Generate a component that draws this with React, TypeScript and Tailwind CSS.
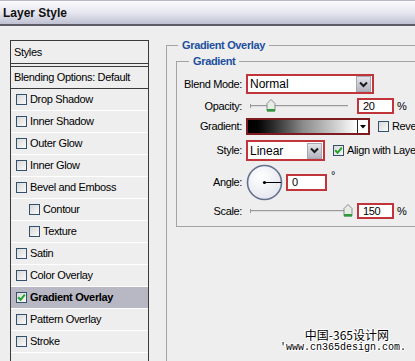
import React from "react";

function Check({ checked }: { checked?: boolean }) {
  return (
    <span className="w-[11px] h-[11px] border border-[#33506c] bg-gradient-to-br from-[#d8d8d8] to-[#fafafa] flex items-center justify-center shrink-0">
      {checked && (
        <svg width="9" height="9" viewBox="0 0 9 9">
          <path d="M1.2 4.3 L3.6 6.8 L7.8 1.6" stroke="#22a32c" strokeWidth="2" fill="none" />
        </svg>
      )}
    </span>
  );
}

function ArrowBtn() {
  return (
    <span className="w-[15px] h-[16px] mr-[1px] shrink-0 bg-gradient-to-b from-[#e4e4ea] to-[#b4b4c0] border border-[#a8a8b4] flex items-center justify-center">
      <svg width="9" height="7" viewBox="0 0 9 7">
        <path d="M1 1.5 L4.5 5 L8 1.5" stroke="#1a1a1a" strokeWidth="2" fill="none" />
      </svg>
    </span>
  );
}

function Slider({ pos }: { pos: number }) {
  return (
    <svg width="103" height="16" viewBox="0 0 103 16" className="ml-[8px] shrink-0">
      <line x1="1" y1="7.5" x2="98" y2="7.5" stroke="#9a9a9a" strokeWidth="1" />
      <line x1="1" y1="8.5" x2="98" y2="8.5" stroke="#dcdcdc" strokeWidth="1" />
      <line x1="0.5" y1="6" x2="0.5" y2="10" stroke="#9a9a9a" strokeWidth="1" />
      <path
        d={`M${pos - 4} 13 L${pos - 4} 5.5 L${pos} 1.5 L${pos + 4} 5.5 L${pos + 4} 13 Z`}
        fill="#e6ece6"
        stroke="#8a8f8a"
        strokeWidth="1"
      />
      <rect x={pos - 4} y="11" width="8" height="2.5" fill="#2f9a3a" />
    </svg>
  );
}

const items: { label: string; indent?: boolean; checked?: boolean; selected?: boolean }[] = [
  { label: "Drop Shadow" },
  { label: "Inner Shadow" },
  { label: "Outer Glow" },
  { label: "Inner Glow" },
  { label: "Bevel and Emboss" },
  { label: "Contour", indent: true },
  { label: "Texture", indent: true },
  { label: "Satin" },
  { label: "Color Overlay" },
  { label: "Gradient Overlay", checked: true, selected: true },
  { label: "Pattern Overlay" },
  { label: "Stroke" },
  { label: "" },
];

export default function App() {
  return (
    <div className="w-[415px] h-[361px] overflow-hidden relative bg-[#eeeeee] flex flex-col font-['Liberation_Sans',Arial,sans-serif] text-[11px] tracking-[-0.35px] text-black">
      {/* Title bar */}
      <div className="h-[26px] shrink-0 border-t border-[#b8b8c0] border-b-2 border-b-[#5c5c68] bg-gradient-to-b from-[#fbfbfd] via-[#e6e7ef] to-[#bfc1d3] flex items-center pl-[3px]">
        <span className="font-bold text-[12px] leading-none tracking-normal text-[#111]">Layer Style</span>
      </div>

      <div className="flex flex-1 min-h-0">
        {/* Left panel */}
        <div className="ml-[10px] mt-[14px] w-[139px] shrink-0 border-x border-t border-[#3a3a3a] flex flex-col overflow-hidden">
          <div className="h-[22px] shrink-0 flex items-center pl-[3px]">Styles</div>
          <div className="h-[1px] shrink-0 bg-[#3a3a3a]" />
          <div className="h-[2px] shrink-0" />
          <div className="h-[1px] shrink-0 bg-[#3a3a3a]" />
          <div className="h-[21px] shrink-0 flex items-center pl-[3px]">Blending Options: Default</div>
          <div className="h-[1px] shrink-0 bg-[#3a3a3a]" />
          {items.map((it, i) => (
            <div
              key={i}
              className={`h-[22px] shrink-0 flex items-center border-b border-white ${it.indent ? "pl-[18px]" : "pl-[5px]"} ${it.selected ? "bg-[#b8b8c4] font-bold" : ""}`}
            >
              {it.label && <Check checked={it.checked} />}
              <span className="ml-[3px]">{it.label}</span>
            </div>
          ))}
        </div>

        {/* Right panel */}
        <div className="ml-[17px] mt-[19px] flex-1 min-w-0 border-t border-l border-[#a4a4a4]">
          <div className="-mt-[7px] ml-[11px] px-[4px] w-fit bg-[#eeeeee] font-bold text-[#1d4f9f] leading-[13px]">
            Gradient Overlay
          </div>
          <div className="ml-[9px] mt-[9px] border-t border-l border-b border-[#a4a4a4] pb-[7px]">
            <div className="-mt-[7px] ml-[12px] px-[4px] w-fit bg-[#eeeeee] font-bold text-[#1d4f9f] leading-[13px]">
              Gradient
            </div>

            {/* Blend mode */}
            <div className="mt-[6px] h-[20px] flex items-center">
              <span className="w-[65px] text-right shrink-0">Blend Mode:</span>
              <div className="ml-[4px] w-[128px] h-[20px] shrink-0 border-2 border-[#c1353a] bg-white flex items-center justify-between">
                <span className="pl-[2px] text-[12px] tracking-normal">Normal</span>
                <ArrowBtn />
              </div>
            </div>

            {/* Opacity */}
            <div className="mt-[4px] h-[16px] flex items-center">
              <span className="w-[65px] text-right shrink-0">Opacity:</span>
              <Slider pos={21} />
              <div className="ml-[4px] w-[37px] h-[16px] shrink-0 border-2 border-[#c1353a] bg-white flex items-center pl-[4px]">20</div>
              <span className="ml-[3px]">%</span>
            </div>

            {/* Gradient */}
            <div className="mt-[4px] h-[17px] flex items-center">
              <span className="w-[65px] text-right shrink-0">Gradient:</span>
              <div className="ml-[4px] w-[124px] h-[17px] shrink-0 border-2 border-[#7e1b1f] flex">
                <div className="flex-1 bg-gradient-to-r from-black via-[#8a8a8a] to-white" />
                <div className="w-[11px] border-l border-[#222] bg-white flex items-center justify-center">
                  <svg width="6" height="4" viewBox="0 0 6 4">
                    <path d="M0 0 L6 0 L3 3.5 Z" fill="#000" />
                  </svg>
                </div>
              </div>
              <span className="ml-[8px] shrink-0">
                <Check />
              </span>
              <span className="ml-[3px] whitespace-nowrap">Reverse</span>
            </div>

            {/* Style */}
            <div className="mt-[5px] h-[21px] flex items-center">
              <span className="w-[65px] text-right shrink-0">Style:</span>
              <div className="ml-[4px] w-[79px] h-[21px] shrink-0 border-2 border-[#c1353a] bg-white flex items-center justify-between">
                <span className="pl-[2px] text-[12px] tracking-normal">Linear</span>
                <ArrowBtn />
              </div>
              <span className="ml-[8px] shrink-0">
                <Check checked />
              </span>
              <span className="ml-[3px] whitespace-nowrap">Align with Layer</span>
            </div>

            {/* Angle */}
            <div className="mt-[3px] h-[36px] flex items-center">
              <span className="w-[65px] text-right shrink-0">Angle:</span>
              <svg width="37" height="37" viewBox="0 0 37 37" className="ml-[4px] shrink-0">
                <defs>
                  <radialGradient id="dialg" cx="0.4" cy="0.35" r="0.7">
                    <stop offset="0" stopColor="#ffffff" />
                    <stop offset="1" stopColor="#e4e6ee" />
                  </radialGradient>
                </defs>
                <circle cx="18.5" cy="18.5" r="17" fill="url(#dialg)" stroke="#65708f" strokeWidth="1.6" />
                <line x1="18.5" y1="18.5" x2="35" y2="18.5" stroke="#000" strokeWidth="1" />
                <circle cx="18.5" cy="18.5" r="1.6" fill="#000" />
              </svg>
              <div className="ml-[3px] w-[41px] h-[17px] shrink-0 border-2 border-[#c1353a] bg-white flex items-center pl-[4px]">0</div>
              <span className="ml-[4px] self-start mt-[6px] leading-none">°</span>
            </div>

            {/* Scale */}
            <div className="mt-[3px] h-[16px] flex items-center">
              <span className="w-[65px] text-right shrink-0">Scale:</span>
              <Slider pos={98} />
              <div className="ml-[4px] w-[37px] h-[16px] shrink-0 border-2 border-[#c1353a] bg-white flex items-center pl-[4px]">150</div>
              <span className="ml-[3px]">%</span>
            </div>
          </div>
        </div>
      </div>

      {/* Watermark */}
      <div className="absolute right-[9px] bottom-[8px] flex flex-col items-end text-black tracking-normal [text-shadow:1px_0_0_#fff,-1px_0_0_#fff,0_1px_0_#fff,0_-1px_0_#fff,1px_1px_0_#fff,-1px_-1px_0_#fff]">
        <span className="mr-[17px] text-[12px] leading-[14px] font-['Noto_Sans_CJK_SC',sans-serif]">中国-365设计网</span>
        <span className="text-[10px] leading-[11px] font-['Liberation_Mono',monospace]">'www.cn365design.com.</span>
      </div>
    </div>
  );
}
